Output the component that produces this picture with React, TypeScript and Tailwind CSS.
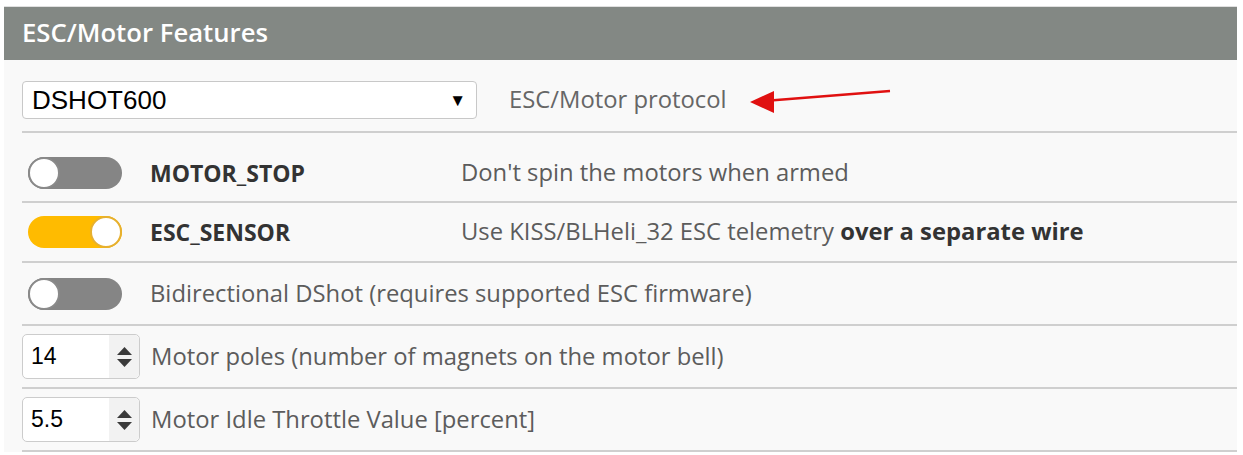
import React from "react";

function Toggle({ on }: { on: boolean }) {
  return (
    <div
      className={
        "relative h-[32px] w-[94px] rounded-full " +
        (on ? "bg-[#ffbb00]" : "bg-[#858585]")
      }
    >
      <div
        className={
          "absolute top-0 h-[32px] w-[32px] rounded-full bg-white border-2 " +
          (on ? "right-0 border-[#e6b030]" : "left-0 border-[#8a8a8a]")
        }
      />
    </div>
  );
}

function NumberInput({ value }: { value: string }) {
  return (
    <div className="flex h-[45px] w-[118px] items-center rounded-[5px] border border-[#cccccc] bg-white">
      <span className="flex-1 pl-[8px] text-[23px] text-black [font-family:'Liberation_Sans',Arial,sans-serif]">
        {value}
      </span>
      <div className="flex h-full w-[30px] flex-col items-center justify-center gap-[4px] bg-[#f2f2f2] rounded-r-[5px]">
        <svg width="15" height="8" viewBox="0 0 15 8">
          <polygon points="7.5,0 15,8 0,8" fill="#3a3a3a" />
        </svg>
        <svg width="15" height="8" viewBox="0 0 15 8">
          <polygon points="0,0 15,0 7.5,8" fill="#3a3a3a" />
        </svg>
      </div>
    </div>
  );
}

export default function App() {
  return (
    <div className="h-[455px] w-[1243px] bg-white pt-[6px] pl-[4px] [font-family:'Open_Sans',sans-serif]">
      <div className="w-[1233px] bg-[#f9f9f9] border-t border-[#e0e0e0]">
        <div className="flex h-[53px] items-center bg-[#838884] pl-[18px] text-[25.7px] font-semibold text-white">
          ESC/Motor Features
        </div>
        <div className="pl-[18px]">
          <div className="flex h-[73px] items-center pt-[9px] border-b-2 border-[#cfcfcf]">
            <div className="flex h-[38px] w-[455px] items-center justify-between rounded-[4px] border border-[#c8c8c8] bg-white pl-[9px] pr-[10px]">
              <span className="text-[26px] text-black [font-family:'Liberation_Sans',Arial,sans-serif]">
                DSHOT600
              </span>
              <span className="text-[17px] text-black">▼</span>
            </div>
            <span className="ml-[32px] text-[23.8px] text-[#666666]">
              ESC/Motor protocol
            </span>
            <svg
              width="145"
              height="30"
              viewBox="0 0 145 30"
              className="ml-[23px]"
            >
              <line x1="14" y1="16" x2="140" y2="6" stroke="#e01010" strokeWidth="2.5" />
              <polygon points="0,17 24,6 24,28" fill="#e01010" />
            </svg>
          </div>
          <div className="flex h-[70px] items-center pt-[12px] border-b-2 border-[#cfcfcf]">
            <div className="ml-[6px] w-[122px]">
              <Toggle on={false} />
            </div>
            <span className="w-[311px] text-[23px] font-bold text-[#333333]">MOTOR_STOP</span>
            <span className="text-[23.8px] text-[#5c5c5c]">Don't spin the motors when armed</span>
          </div>
          <div className="flex h-[60px] items-center border-b-2 border-[#cfcfcf]">
            <div className="ml-[6px] w-[122px]">
              <Toggle on={true} />
            </div>
            <span className="w-[311px] text-[23px] font-bold text-[#333333]">ESC_SENSOR</span>
            <span className="text-[23.8px] text-[#5c5c5c]">
              Use KISS/BLHeli_32 ESC telemetry{" "}
              <b className="font-bold text-[#333333]">over a separate wire</b>
            </span>
          </div>
          <div className="flex h-[63px] items-center border-b-2 border-[#cfcfcf]">
            <div className="ml-[6px] w-[122px]">
              <Toggle on={false} />
            </div>
            <span className="text-[23.8px] text-[#5c5c5c]">
              Bidirectional DShot (requires supported ESC firmware)
            </span>
          </div>
          <div className="flex h-[63px] items-center border-b-2 border-[#cfcfcf]">
            <NumberInput value="14" />
            <span className="ml-[11px] text-[23.8px] text-[#5c5c5c]">
              Motor poles (number of magnets on the motor bell)
            </span>
          </div>
          <div className="flex h-[63px] items-center border-b-2 border-[#cfcfcf]">
            <NumberInput value="5.5" />
            <span className="ml-[11px] text-[23.8px] text-[#5c5c5c]">
              Motor Idle Throttle Value [percent]
            </span>
          </div>
        </div>
      </div>
    </div>
  );
}
